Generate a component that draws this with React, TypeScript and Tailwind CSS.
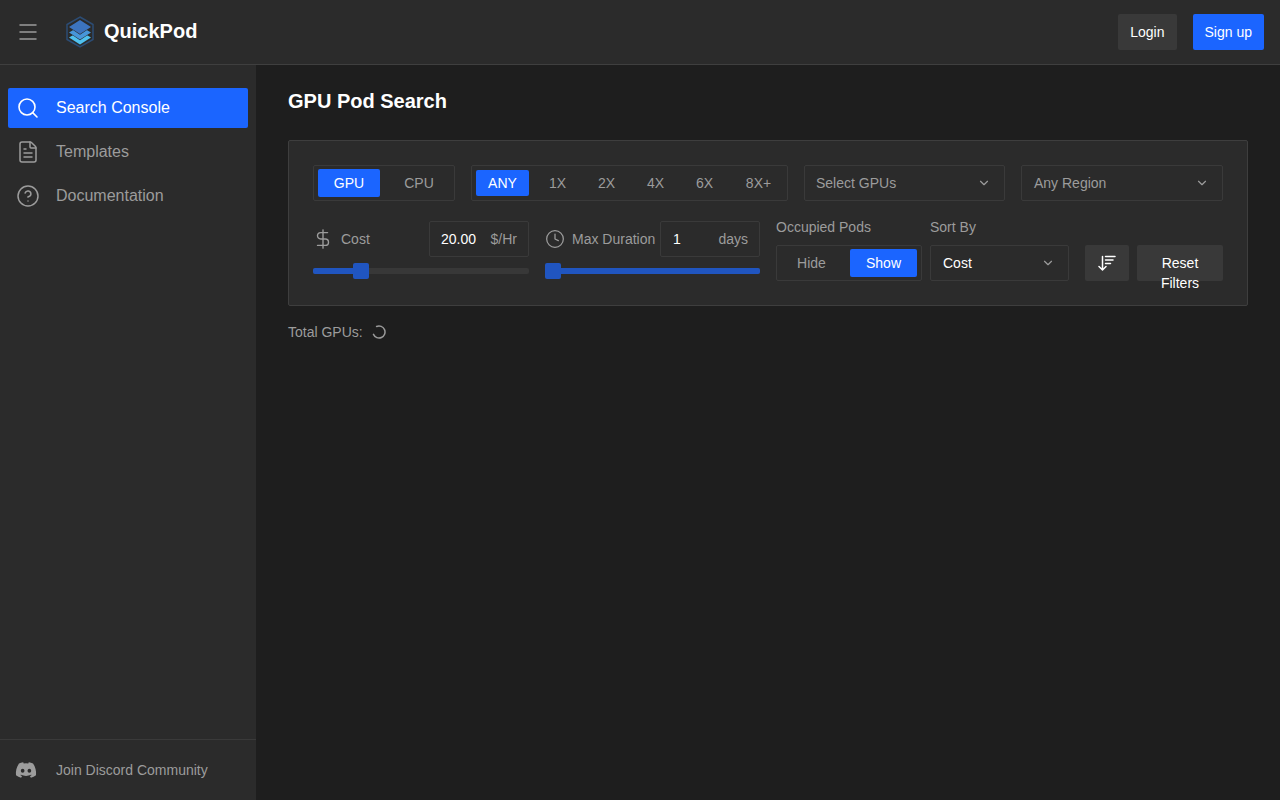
import { Search, FileText, CircleHelp, Menu, DollarSign, Clock, ChevronDown } from 'lucide-react'
import { FaDiscord } from 'react-icons/fa'

function Logo() {
  return (
    <svg width="28" height="32" viewBox="0 0 28 32" fill="none">
      <path d="M14 1 L27 8.5 V23.5 L14 31 L1 23.5 V8.5 Z" stroke="#2c4c74" strokeWidth="1.5" />
      <path d="M3 21.5 L14 15 L25 21.5 L14 28.5 Z" fill="#4fc1ef" />
      <path d="M2.5 16.5 L14 9 L25.5 16.5 L14 24.2 Z" fill="#2b2b2b" />
      <path d="M3 16.5 L14 10 L25 16.5 L14 23.5 Z" fill="#4796da" />
      <path d="M2.5 11 L14 3.5 L25.5 11 L14 18.7 Z" fill="#2b2b2b" />
      <path d="M3 11 L14 4 L25 11 L14 18 Z" fill="#3c74bf" />
    </svg>
  )
}

function SortIcon() {
  return (
    <svg width="18" height="18" viewBox="0 0 18 18" fill="none" stroke="#fff" strokeWidth="1.5" strokeLinecap="round">
      <path d="M4.5 2.5 V16 M1 12.5 L4.5 16 L8 12.5" />
      <path d="M7.5 2.5 H17 M7.5 6 H15 M7.5 9.5 H12.5" />
    </svg>
  )
}

function Spinner() {
  return (
    <svg width="14" height="14" viewBox="0 0 14 14" fill="none" stroke="#9a9a9a" strokeWidth="1.5" strokeLinecap="round">
      <path d="M4.6 1.5 A6 6 0 1 1 1.5 9.4" />
    </svg>
  )
}

function Select({ label, className, active }: { label: string; className: string; active?: boolean }) {
  return (
    <div className={`h-9 flex items-center justify-between border border-[#3a3a3a] rounded-[2px] pr-[13px] ${className}`}>
      <span className={active ? 'text-white' : 'text-[#9c9c9c]'}>{label}</span>
      <ChevronDown size={14} className="text-[#9c9c9c]" />
    </div>
  )
}

function Slider({ fill, thumb }: { fill: string; thumb: string }) {
  return (
    <div className="relative h-1.5 mt-[11px] rounded-[2px] bg-[#383838]">
      <div className={`h-full rounded-[2px] bg-[#2055c0] ${fill}`} />
      <div className={`absolute top-[-5px] w-4 h-4 rounded-[2px] bg-[#2055c0] ${thumb}`} />
    </div>
  )
}

export default function App() {
  const multiples = ['1X', '2X', '4X', '6X']

  return (
    <div className="w-[1280px] h-[800px] overflow-hidden flex flex-col bg-[#1e1e1e] text-sm text-[#9c9c9c] font-['Liberation_Sans',Arial,sans-serif]">
      <header className="h-[65px] shrink-0 flex items-center justify-between bg-[#2b2b2b] border-b border-[#3f3f3f] px-4">
        <div className="flex items-center">
          <Menu size={24} strokeWidth={1.5} />
          <div className="ml-[26px] mr-[10px] flex items-center"><Logo /></div>
          <span className="text-xl font-bold text-white mt-[-2px]">QuickPod</span>
        </div>
        <div className="flex items-center gap-4 text-white">
          <button className="h-9 px-3 rounded-[2px] bg-[#393939]">Login</button>
          <button className="h-9 px-3 rounded-[2px] bg-[#1b65ff]">Sign up</button>
        </div>
      </header>

      <div className="flex-1 flex min-h-0">
        <aside className="w-64 shrink-0 flex flex-col justify-between bg-[#2b2b2b]">
          <nav className="pt-[23px] px-2 flex flex-col gap-1 text-base">
            <div className="h-10 flex items-center rounded-[2px] bg-[#1b65ff] text-white pl-2">
              <Search size={24} strokeWidth={1.6} />
              <span className="ml-4">Search Console</span>
            </div>
            <div className="h-10 flex items-center pl-2">
              <FileText size={24} strokeWidth={1.5} />
              <span className="ml-4">Templates</span>
            </div>
            <div className="h-10 flex items-center pl-2">
              <CircleHelp size={24} strokeWidth={1.5} />
              <span className="ml-4">Documentation</span>
            </div>
          </nav>
          <div className="h-[61px] flex items-center border-t border-[#3a3a3a] pl-[15px]">
            <FaDiscord size={22} />
            <span className="ml-[19px]">Join Discord Community</span>
          </div>
        </aside>

        <main className="flex-1 px-8 pt-6">
          <h1 className="text-xl font-bold leading-6 text-white">GPU Pod Search</h1>

          <section className="mt-[27px] h-[166px] border border-[#3e3e3e] rounded-[2px] bg-[#2b2b2b] px-6 pt-6">
            <div className="flex gap-4">
              <div className="w-[142px] h-9 flex items-center border border-[#3a3a3a] rounded-[2px] pl-1">
                <div className="w-[62px] h-7 flex items-center justify-center rounded-[2px] bg-[#1b65ff] text-white">GPU</div>
                <div className="w-[70px] ml-1 text-center">CPU</div>
              </div>
              <div className="w-[317px] h-9 flex items-center border border-[#3a3a3a] rounded-[2px] px-1">
                <div className="w-[53px] h-[26px] flex items-center justify-center rounded-[2px] bg-[#1b65ff] text-white mr-1">ANY</div>
                {multiples.map((m) => (
                  <div key={m} className="w-[49px] text-center">{m}</div>
                ))}
                <div className="w-[49px] text-center ml-[5px]">8X+</div>
              </div>
              <Select label="Select GPUs" className="w-[201px] pl-[11px]" />
              <Select label="Any Region" className="w-[202px] pl-3" />
            </div>

            <div className="flex mt-5">
              <div className="w-[216px]">
                <div className="h-9 flex items-center">
                  <DollarSign size={22} strokeWidth={1.5} className="-ml-px" />
                  <span className="ml-[7px]">Cost</span>
                  <div className="ml-auto w-[100px] h-9 flex items-center justify-between border border-[#3a3a3a] rounded-[2px] px-[11px]">
                    <span className="text-white">20.00</span>
                    <span>$/Hr</span>
                  </div>
                </div>
                <Slider fill="w-[48px]" thumb="left-[40px]" />
              </div>

              <div className="w-[215px] ml-4">
                <div className="h-9 flex items-center">
                  <Clock size={20} strokeWidth={1.5} />
                  <span className="ml-[7px]">Max Duration</span>
                  <div className="ml-auto w-[100px] h-9 flex items-center justify-between border border-[#3a3a3a] rounded-[2px] pl-3 pr-[11px]">
                    <span className="text-white">1</span>
                    <span>days</span>
                  </div>
                </div>
                <Slider fill="w-full" thumb="left-0" />
              </div>

              <div className="w-[146px] ml-4">
                <div className="h-6 leading-3">Occupied Pods</div>
                <div className="h-9 flex items-center border border-[#3a3a3a] rounded-[2px] pr-1">
                  <div className="w-[69px] text-center">Hide</div>
                  <div className="w-[67px] h-7 ml-1 flex items-center justify-center rounded-[2px] bg-[#1b65ff] text-white">Show</div>
                </div>
              </div>

              <div className="w-[139px] ml-2">
                <div className="h-6 leading-3">Sort By</div>
                <Select label="Cost" className="w-full pl-3" active />
              </div>

              <button className="w-11 h-9 mt-6 ml-4 flex items-center justify-center rounded-[2px] bg-[#393939]">
                <SortIcon />
              </button>
              <button className="w-[86px] h-9 mt-6 ml-2 rounded-[2px] bg-[#393939] text-white leading-5 px-4 pt-2 flex flex-col items-center justify-start">
                <span>Reset</span>
                <span>Filters</span>
              </button>
            </div>
          </section>

          <div className="mt-4 flex items-center h-5">
            <span>Total GPUs:</span>
            <span className="ml-[9px]"><Spinner /></span>
          </div>
        </main>
      </div>
    </div>
  )
}
